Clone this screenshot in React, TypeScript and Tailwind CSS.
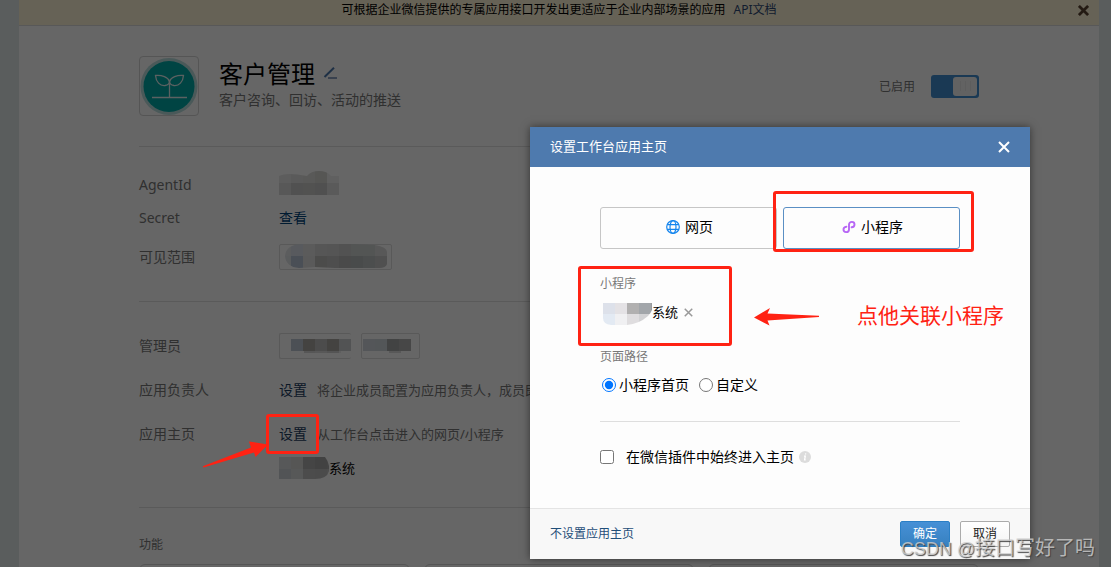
import { useId, useState } from "react";
import type { ReactNode } from "react";

interface MosaicProps {
  rows: string[][];
  width: number;
  height: number;
  clip: string;
  // how much of the first column is cut away
  inset?: number;
}

// Redacted value: 12px blocks cut to a hand-painted outline
function Mosaic({ rows, width, height, clip, inset = 0 }: MosaicProps) {
  const id = useId();

  return (
    <svg width={width} height={height} className="block shrink-0" aria-hidden="true">
      <clipPath id={id}>
        <path d={clip} />
      </clipPath>
      <g clipPath={`url(#${id})`} shapeRendering="crispEdges">
        {rows.map((row, y) =>
          row.map((fill, x) => (
            <rect key={`${x}-${y}`} x={x * 12 - inset} y={y * 12} width={12} height={12} fill={fill} />
          )),
        )}
      </g>
    </svg>
  );
}

function CloseIcon({ size, width }: { size: number; width: number }) {
  return (
    <svg width={size} height={size} viewBox="0 0 12 12" fill="none" stroke="currentColor" strokeWidth={width}>
      <path d="M1 1l10 10M11 1L1 11" />
    </svg>
  );
}

function SproutLogo() {
  return (
    <svg width="58" height="58" viewBox="0 0 58 58" fill="none">
      <circle cx="29" cy="29.5" r="28.5" fill="#b9dfdf" />
      <circle cx="29" cy="29.5" r="25.5" fill="#00aaa8" />
      <g stroke="#e4f2f2" strokeWidth="1.3">
        <path d="M12 40.5h35M29.500 40V24" />
        <path d="M29.500 24.500C28 20 22 18 15.500 18.500C16 25 20 29 25 28.500C28 28 29.500 27 29.500 24.500Z" />
        <path d="M29.500 24.500C31 20 37 18 43.500 18.500C43 25 39 29 34 28.500C31 28 29.500 27 29.500 24.500Z" />
      </g>
    </svg>
  );
}

function GlobeIcon() {
  return (
    <svg width="14" height="14" viewBox="0 0 14 14" fill="none" stroke="#1485ee" strokeWidth="1.2">
      <circle cx="7" cy="7" r="6.300" />
      <ellipse cx="7" cy="7" rx="3" ry="6.300" />
      <path d="M1.200 4.700h11.600M1.200 9.300h11.600" />
    </svg>
  );
}

function MiniProgramIcon() {
  return (
    <svg width="14" height="14" viewBox="0 0 14 14" fill="none" stroke="#b767f5" strokeWidth="1.900" strokeLinecap="round">
      <path d="M4.400 6.700C2.700 6.900 1.500 8 1.500 9.600C1.500 11.100 2.700 12.100 4.100 12.100C5.800 12.100 7 11 7 9.400V4.600C7 3 8.200 1.900 9.900 1.900C11.300 1.900 12.500 2.900 12.500 4.400C12.500 6 11.300 7.100 9.600 7.300" />
    </svg>
  );
}

function Row({ label, className, children }: { label: string; className: string; children: ReactNode }) {
  return (
    <div className={`flex items-center ${className}`}>
      <dt className="w-[140px] shrink-0 text-[#787878]">{label}</dt>
      <dd className="flex min-w-0 items-center whitespace-nowrap">{children}</dd>
    </div>
  );
}

function AppDetail() {
  const [enabled, setEnabled] = useState(true);

  return (
    <div className="mx-3 ml-[19px] min-h-screen bg-white">
      <div className="relative flex h-[26px] items-center justify-center border-b border-[#dcdcdc] bg-[#fff4d6] pb-1.5 text-xs leading-5">
        <p>可根据企业微信提供的专属应用接口开发出更适应于企业内部场景的应用</p>
        <a href="#api" className="ml-2 text-[#2e4a75]">
          API文档
        </a>
        <button type="button" aria-label="关闭提示" className="absolute top-[5px] right-2.5 text-[#594231]">
          <CloseIcon size={11} width={3} />
        </button>
      </div>

      <main className="mx-[120px] text-sm leading-6">
        <header className="flex border-b border-[#e0e0e0] py-[30px]">
          <div className="size-[60px] shrink-0 rounded-sm border border-[#d4d4d4]">
            <SproutLogo />
          </div>
          <div className="ml-5 flex-1">
            <div className="flex items-center gap-2">
              <h1 className="pt-0.5 text-2xl leading-8">客户管理</h1>
              <button type="button" aria-label="编辑名称">
                <svg width="14" height="12" viewBox="0 0 14 12" fill="none">
                  <path d="M1.500 10L11 .8" stroke="#4d79ad" strokeWidth="2" />
                  <path d="M5 11h9" stroke="#8299bd" strokeWidth="1.800" />
                </svg>
              </button>
            </div>
            <p className="leading-5 text-[#787878]">客户咨询、回访、活动的推送</p>
          </div>
          <div className="flex items-center gap-4 text-xs text-[#787878]">
            <span id="enabled-label" className="pt-0.5">
              已启用
            </span>
            <button
              type="button"
              role="switch"
              aria-checked={enabled}
              aria-labelledby="enabled-label"
              onClick={() => setEnabled(!enabled)}
              className={`flex h-[23px] w-12 rounded-[3px] p-0.5 ${enabled ? "justify-end bg-[#428fd2]" : "justify-start bg-[#b5b5b5]"}`}
            >
              <span className="flex h-full w-6 items-center justify-center gap-1 rounded-[3px] bg-[#f4f4f4]">
                <i className="h-2.5 w-px bg-[#e9e9e9]" />
                <i className="h-2.5 w-px bg-[#e9e9e9]" />
                <i className="h-2.5 w-px bg-[#e9e9e9]" />
              </span>
            </button>
          </div>
        </header>

        <dl className="border-b border-[#e0e0e0] pt-[26px] pb-[31px]">
          <Row label="AgentId" className="h-6">
            <Mosaic
              width={60}
              height={28}
              clip="M0 24V5Q8 1 28 5Q32 0 40 0Q48 0 52 5H60V24Z"
              rows={[
                ["#e8e8e8", "#e2e2e1", "#dfdfdc", "#d6d6d2", "#efefef"],
                ["#dcdcdc", "#cbcbcb", "#cecdca", "#c8c8c7", "#e2e2e2"],
              ]}
            />
          </Row>
          <Row label="Secret" className="mt-[9px] h-6">
            <a href="#secret" className="text-[#00447c]">
              查看
            </a>
          </Row>
          <Row label="可见范围" className="mt-3.5 h-[26px]">
            <span className="flex h-[26px] w-[113px] items-center rounded-xs border border-[#dedede] pb-0.5 pl-[5px]">
              <Mosaic
                width={102}
                height={24}
                inset={6}
                clip="M0 12Q1 0 18 0H70L90 1Q102 3 102 8V20Q101 24 94 24H50L30 23L14 24Q1 23 0 12Z"
                rows={[
                  ["#e6e8ec", "#dce2ea", "#e4e4e4", "#d8d8d8", "#d4d4d4", "#cecece", "#d0d4d3", "#d0d4d3", "#dddddd"],
                  ["#e2e5e9", "#bac6d6", "#e0e0e0", "#bfbebb", "#c3c3c3", "#b9b9b9", "#b6bcbc", "#bfc2c2", "#c8c8c8"],
                ]}
              />
            </span>
          </Row>
        </dl>

        <dl className="border-b border-[#e0e0e0] pt-[31px] pb-[27px]">
          <Row label="管理员" className="h-[26px]">
            <span className="flex h-[26px] w-[72px] items-center rounded-xs border border-r-0 border-[#dedede] pl-[11px]">
              <Mosaic
                width={60}
                height={14}
                clip="M0 0H60V12H50V14H13V12H0Z"
                rows={[
                  ["#bec8d5", "#aaa8a4", "#bebebe", "#aaa8a2", "#cccfd2"],
                  ["#eeeeee", "#d8d8d8", "#dddddd", "#d2d2d2", "#eeeeee"],
                ]}
              />
            </span>
            <span className="ml-2.5 flex h-[26px] w-[59px] items-center rounded-xs border border-[#dedede] pl-px">
              <Mosaic
                width={48}
                height={14}
                clip="M0 0H48V12H38V14H26V12H0Z"
                rows={[
                  ["#d1d8de", "#cfd6dd", "#a5a7a7", "#b2b2b2"],
                  ["#eeeeee", "#eeeeee", "#dddddd", "#dddddd"],
                ]}
              />
            </span>
          </Row>
          <Row label="应用负责人" className="mt-[19px] h-6">
            <a href="#owner" className="text-[#1d3d5f]">
              设置
            </a>
            <span className="ml-2.5 text-[13px] text-[#787878]">
              将企业成员配置为应用负责人，成员即可管理此应用
            </span>
          </Row>
          <Row label="应用主页" className="mt-5 h-6">
            <a href="#home" className="text-[#1d3d5f]">
              设置
            </a>
            <span className="ml-2.5 text-[13px] text-[#787878]">从工作台点击进入的网页/小程序</span>
          </Row>
          <div className="mt-2.5 flex h-6 items-center pl-[140px] text-[13px]">
            <Mosaic
              width={50}
              height={22}
              clip="M0 0H46Q51 6 50 14Q48 22 36 22H0Z"
              rows={[
                ["#d9dbdf", "#d7d6d4", "#adadad", "#a5a5a6", "#ababab"],
                ["#ced3d7", "#d9dbdc", "#bebebe", "#bcbcbc", "#c0c0c0"],
              ]}
            />
            系统
          </div>
        </dl>

        <section>
          <h2 className="pt-[25px] text-xs leading-6 text-[#787878]">功能</h2>
          <div className="mt-[7px] grid grid-cols-3 gap-3.5">
            <div className="h-24 rounded-md border border-[#d4d4d4]" />
            <div className="h-24 rounded-md border border-[#d4d4d4]" />
            <div className="h-24 rounded-md border border-[#d4d4d4]" />
          </div>
        </section>
      </main>
    </div>
  );
}

function HomePageDialog() {
  const [kind, setKind] = useState("mini");
  const tab = "flex h-[42px] items-center justify-center gap-[5px] rounded-[3px] border pb-0.5 pl-0.5 text-sm";

  return (
    <div
      role="dialog"
      aria-labelledby="dialog-title"
      className="relative w-[500px] bg-[#fdfdfd] shadow-[0_0_8px_rgba(0,0,0,0.5)]"
    >
      <header className="flex h-10 items-center justify-between bg-[#4e7aae] px-5 text-white">
        <h2 id="dialog-title" className="text-[13px]">
          设置工作台应用主页
        </h2>
        <button type="button" aria-label="关闭">
          <CloseIcon size={12} width={2} />
        </button>
      </header>

      <div className="px-[70px] pt-10 pb-[41px] text-sm leading-5">
        <div className="grid grid-cols-2 gap-1.5">
          <button
            type="button"
            onClick={() => setKind("web")}
            className={`${tab} ${kind === "web" ? "border-[#5a8fc4]" : "border-[#c6c6c6]"}`}
          >
            <GlobeIcon />
            网页
          </button>
          <button
            type="button"
            onClick={() => setKind("mini")}
            className={`${tab} ${kind === "mini" ? "border-[#5a8fc4]" : "border-[#c6c6c6]"}`}
          >
            <MiniProgramIcon />
            小程序
          </button>
        </div>

        <h3 className="mt-[25px] text-xs leading-5 text-[#787878]">小程序</h3>
        <div className="mt-2 flex h-5 items-start pl-[3px] text-[13px]">
          <Mosaic
            width={49}
            height={24}
            clip="M0 1H49Q51 8 45 14Q36 22 24 23H8Q0 22 0 16Z"
            rows={[
              ["#dde1ea", "#e4e2e5", "#b1b0b0", "#a2a6aa", "#999b9d"],
              ["#e3eaf3", "#f0f0f2", "#dfdddf", "#d2d2d4", "#bcbcbe"],
            ]}
          />
          系统
          <button type="button" aria-label="移除小程序" className="mt-1.5 ml-1.5 text-[#999999]">
            <CloseIcon size={9} width={2} />
          </button>
        </div>

        <fieldset className="mt-[25px]">
          <legend className="text-xs leading-5 text-[#787878]">页面路径</legend>
          <div className="mt-2 flex items-center gap-2.5 pl-0.5">
            <label className="flex items-center gap-[3px]">
              <input type="radio" name="path" defaultChecked className="size-3.5" />
              小程序首页
            </label>
            <label className="flex items-center gap-[3px]">
              <input type="radio" name="path" className="size-3.5" />
              自定义
            </label>
          </div>
        </fieldset>

        <hr className="mt-[26px] border-[#dedede]" />

        <div className="mt-[25px] flex items-center">
          <label className="flex items-center gap-3">
            <input type="checkbox" className="size-3.5" />
            在微信插件中始终进入主页
          </label>
          <svg width="12" height="12" viewBox="0 0 12 12" className="ml-[5px]">
            <circle cx="6" cy="6" r="6" fill="#dcdcdc" />
            <path d="M6.700 2.300L6.500 3.500M5 5.200h1.300L5.600 8.900h1.100" stroke="#fff" strokeWidth="1.300" fill="none" />
          </svg>
        </div>
      </div>

      <footer className="flex items-center border-t border-[#e4e4e4] bg-[#f8f8f8] px-5 py-3 text-xs">
        <a href="#unset" className="mr-auto text-[#1f4e79]">
          不设置应用主页
        </a>
        <button
          type="button"
          className="h-[26px] w-[50px] rounded-xs border border-[#2b7fc5] bg-linear-to-b from-[#4690d6] to-[#3781c0] text-white"
        >
          确定
        </button>
        <button
          type="button"
          className="ml-2.5 h-[26px] w-[50px] rounded-xs border border-[#ababab] bg-linear-to-b from-white to-[#f5f5f5] text-[#222222]"
        >
          取消
        </button>
      </footer>
    </div>
  );
}

// Red tutorial marks drawn over the page
function Annotations() {
  const box = "absolute rounded-[3px] border-3 border-[#ff2213]";

  return (
    <div className="pointer-events-none absolute inset-0">
      <div className={`${box} top-[414px] left-[266px] h-10 w-[53px]`} />
      <div className={`${box} top-[191px] left-[773px] h-[61px] w-[201px]`} />
      <div className={`${box} top-[266px] left-[578px] h-20 w-[154px]`} />
      <svg width="66" height="30" viewBox="0 0 66 30" className="absolute top-[440px] left-[202px]" fill="#ff2213">
        <path d="M.8 26.200L49 7.500L47 1.500L66 4.500L53.500 17L52 12.500L1.500 27.600Z" />
      </svg>
      <svg width="66" height="18" viewBox="0 0 66 18" className="absolute top-[308px] left-[754px]" fill="#ff2213">
        <path d="M0 9.500L16 0L13.500 5.500L65 7.800V9L13.500 12.500L15.500 17.500Z" />
      </svg>
      <p className="absolute top-[301px] left-[857px] text-[21px] leading-7 whitespace-nowrap text-[#ff2213]">
        点他关联小程序
      </p>
      <p className="absolute right-4 bottom-1 font-['Liberation_Sans','Noto_Sans_CJK_SC',sans-serif] text-xl leading-7 whitespace-nowrap text-[#d0d0d0]/80 [text-shadow:1px_1px_1px_#444]">
        <span className="text-lg">CSDN @</span>接口写好了吗
      </p>
    </div>
  );
}

export default function App() {
  return (
    <div className="relative h-screen overflow-hidden bg-[#e2e9e8] font-['Noto_Sans','Noto_Sans_CJK_SC',sans-serif] text-black">
      <AppDetail />
      <div className="absolute inset-0 flex items-start justify-end bg-black/60 pt-[127px] pr-[81px]">
        <HomePageDialog />
      </div>
      <Annotations />
    </div>
  );
}
